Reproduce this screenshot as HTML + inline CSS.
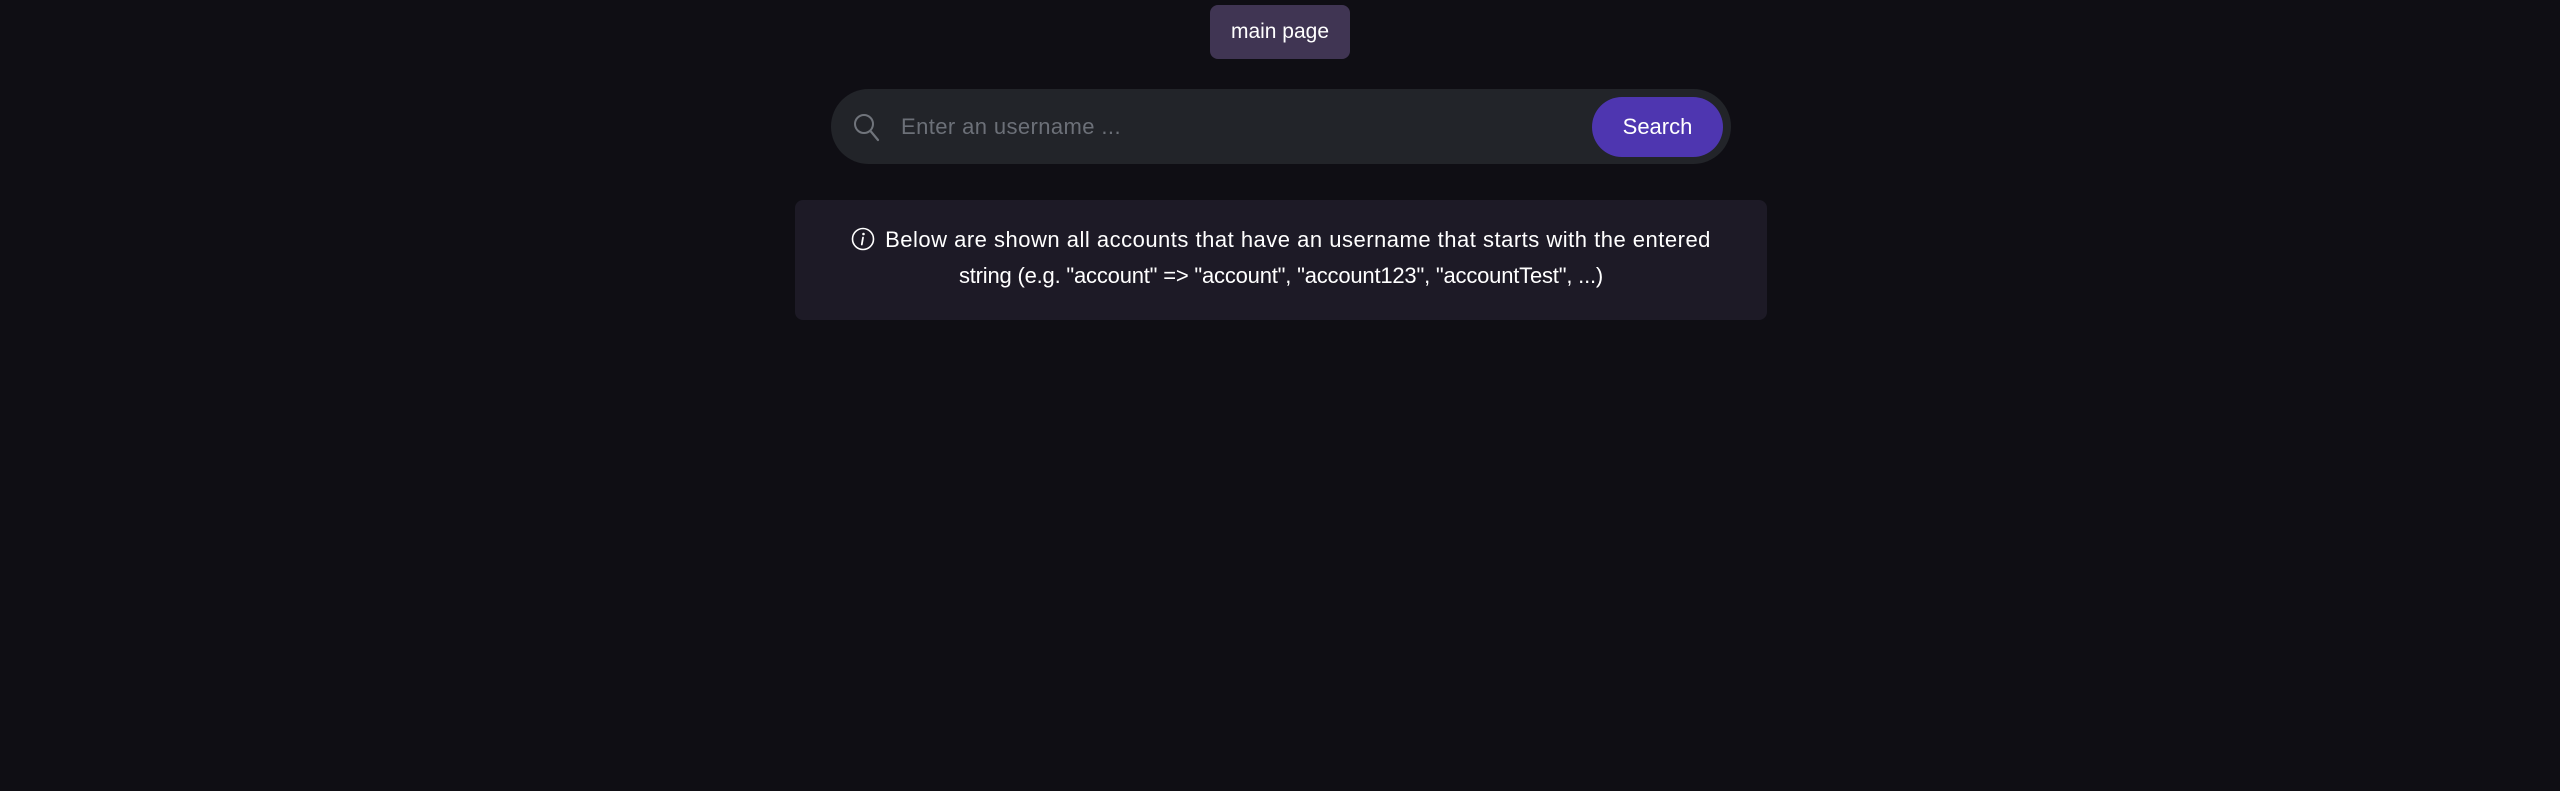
<!DOCTYPE html>
<html><head><style>
html,body{margin:0;padding:0;background:#0f0e14;width:2560px;height:791px;overflow:hidden;font-family:"Liberation Sans",sans-serif;}
.btn{position:absolute;left:1210px;top:5px;width:140px;height:54px;background:#403553;border-radius:8px;color:#fff;font-size:21px;display:flex;align-items:center;justify-content:center;letter-spacing:0px}
.bar{position:absolute;left:831px;top:89px;width:900px;height:75px;background:#222429;border-radius:38px}
.ph{position:absolute;left:70px;top:0;line-height:75px;color:#6c7078;font-size:22px;letter-spacing:0.4px}
.sb{position:absolute;left:761px;top:8px;width:131px;height:60px;background:#4e36b0;border-radius:30px;color:#fff;font-size:22px;display:flex;align-items:center;justify-content:center;letter-spacing:0px}
.info{position:absolute;left:795px;top:200px;width:972px;height:120px;background:#1d1a26;border-radius:8px;color:#fff;font-size:22px;text-align:center;letter-spacing:0.5px}
.info p{margin:0;position:absolute;left:0;right:0;line-height:36px;white-space:nowrap}
</style></head><body>
<div class="btn">main page</div>
<div class="bar">
<svg style="position:absolute;left:22px;top:24px" width="28" height="30" viewBox="0 0 28 30"><circle cx="11" cy="11" r="9" fill="none" stroke="#70747b" stroke-width="2"/><line x1="17.5" y1="18" x2="25" y2="27" stroke="#70747b" stroke-width="2.2" stroke-linecap="round"/></svg>
<div class="ph">Enter an username ...</div>
<div class="sb">Search</div>
</div>
<div class="info">
<p style="top:22px"><svg style="vertical-align:-4px;margin-right:10px" width="24" height="24" viewBox="0 0 24 24"><circle cx="12" cy="12" r="10.5" fill="none" stroke="#fff" stroke-width="1.6"/><circle cx="12.5" cy="7" r="1.3" fill="#fff"/><path d="M12 10.5 L10.8 17.5" stroke="#fff" stroke-width="1.8" stroke-linecap="round"/></svg>Below are shown all accounts that have an username that starts with the entered</p>
<p style="top:58px;letter-spacing:-0.2px">string (e.g. "account" =&gt; "account", "account123", "accountTest", ...)</p>
</div>
</body></html>
